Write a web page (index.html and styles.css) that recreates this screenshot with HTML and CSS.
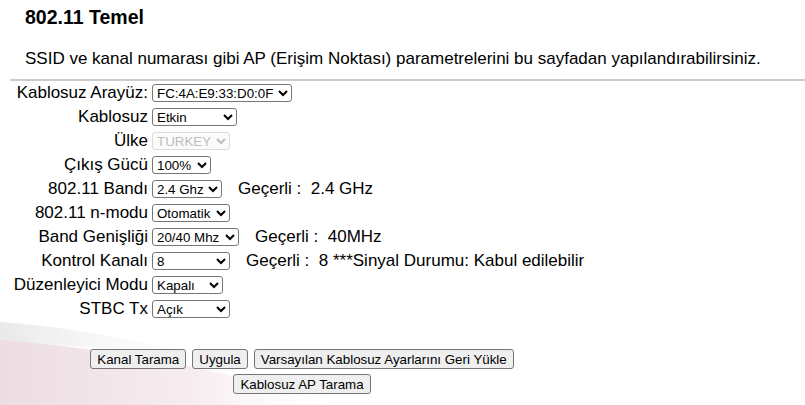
FILE: index.html
```html
<!DOCTYPE html>
<html lang="tr">
<head>
<meta charset="utf-8">
<title>802.11 Temel</title>
<link rel="stylesheet" href="styles.css">
</head>
<body>
<div class="page">
  <h1 class="title">802.11 Temel</h1>
  <p class="desc">SSID ve kanal numarası gibi AP (Erişim Noktası) parametrelerini bu sayfadan yapılandırabilirsiniz.</p>
  <hr class="sep">
  <div class="form">
    <div class="lbl">Kablosuz Arayüz:</div>
    <div class="ctl"><select class="sel w-if"><option>FC:4A:E9:33:D0:0F</option></select></div>

    <div class="lbl">Kablosuz</div>
    <div class="ctl"><select class="sel w-en"><option>Etkin</option><option>Devre Dışı</option></select></div>

    <div class="lbl">Ülke</div>
    <div class="ctl"><select class="sel w-cn" disabled><option>TURKEY</option></select></div>

    <div class="lbl">Çıkış Gücü</div>
    <div class="ctl"><select class="sel w-pw"><option>100%</option><option>75%</option><option>50%</option><option>25%</option></select></div>

    <div class="lbl">802.11 Bandı</div>
    <div class="ctl"><select class="sel w-bd"><option>2.4 Ghz</option></select><span class="cur">Geçerli :&nbsp; 2.4 GHz</span></div>

    <div class="lbl">802.11 n-modu</div>
    <div class="ctl"><select class="sel w-nm"><option>Otomatik</option><option>Kapalı</option></select></div>

    <div class="lbl">Band Genişliği</div>
    <div class="ctl"><select class="sel w-bw"><option>20/40 Mhz</option><option>20 Mhz</option></select><span class="cur">Geçerli :&nbsp; 40MHz</span></div>

    <div class="lbl">Kontrol Kanalı</div>
    <div class="ctl"><select class="sel w-ch"><option>8</option><option>Otomatik</option></select><span class="cur">Geçerli :&nbsp; 8 ***Sinyal Durumu: Kabul edilebilir</span></div>

    <div class="lbl">Düzenleyici Modu</div>
    <div class="ctl"><select class="sel w-rg"><option>Kapalı</option><option>Açık</option></select></div>

    <div class="lbl">STBC Tx</div>
    <div class="ctl"><select class="sel w-st"><option>Açık</option><option>Kapalı</option></select></div>
  </div>
  <div class="actions">
    <div class="btn-row">
      <button class="btn" type="button">Kanal Tarama</button>
      <button class="btn" type="button">Uygula</button>
      <button class="btn" type="button">Varsayılan Kablosuz Ayarlarını Geri Yükle</button>
    </div>
    <div class="btn-row">
      <button class="btn" type="button">Kablosuz AP Tarama</button>
    </div>
  </div>
</div>
</body>
</html>
```

FILE: styles.css
```css
html, body {
  margin: 0;
  padding: 0;
}
body {
  width: 805px;
  height: 405px;
  overflow: hidden;
  background-color: #ffffff;
  background-image: url("data:image/svg+xml,%3Csvg xmlns='http://www.w3.org/2000/svg' width='805' height='405'%3E%3Cdefs%3E%3ClinearGradient id='p' x1='0' y1='0' x2='1' y2='0'%3E%3Cstop offset='0' stop-color='%23eddde2'/%3E%3Cstop offset='0.55' stop-color='%23f6ecef'/%3E%3Cstop offset='1' stop-color='%23ffffff' stop-opacity='0'/%3E%3C/linearGradient%3E%3ClinearGradient id='g' x1='0' y1='0' x2='1' y2='0'%3E%3Cstop offset='0' stop-color='%23e9e9e9'/%3E%3Cstop offset='1' stop-color='%23ffffff' stop-opacity='0'/%3E%3C/linearGradient%3E%3C/defs%3E%3Cpath d='M0 322 Q120 330 250 372 Q130 346 0 342 Z' fill='url(%23g)'/%3E%3Cpath d='M0 340 Q150 350 350 405 L0 405 Z' fill='url(%23p)'/%3E%3C/svg%3E");
  background-repeat: no-repeat;
  font-family: "Liberation Sans", Arial, sans-serif;
  color: #000;
}
.page {
  display: flex;
  flex-direction: column;
}
.title {
  margin: 6px 0 0 25px;
  font-size: 19.5px;
  line-height: 22px;
  font-weight: bold;
}
.desc {
  margin: 21px 0 0 25px;
  font-size: 17px;
  line-height: 20px;
}
.sep {
  margin: 10px 0 0 10px;
  height: 2px;
  border: none;
  background: #cccccc;
}
.form {
  display: grid;
  grid-template-columns: 148px auto;
  grid-auto-rows: 24px;
  column-gap: 4px;
  align-items: center;
  font-size: 17px;
}
.lbl {
  text-align: right;
  white-space: nowrap;
  line-height: 20px;
}
.ctl {
  display: flex;
  align-items: center;
  white-space: nowrap;
  line-height: 20px;
}
.sel {
  box-sizing: border-box;
  height: 18px;
  margin: 0;
  font-family: "Liberation Sans", Arial, sans-serif;
  font-size: 13.33px;
  color: #000;
  background-color: #fff;
  border: 1px solid #767676;
  border-radius: 3px;
}
.sel:disabled {
  color: #a0a0a0;
  border-color: #d0d0d0;
  background-color: #fafafa;
}
.w-if { width: 140px; }
.w-en { width: 85px; }
.w-cn { width: 78px; }
.w-pw { width: 59px; }
.w-bd { width: 70px; }
.w-nm { width: 78px; }
.w-bw { width: 87px; }
.w-ch { width: 78px; }
.w-rg { width: 71px; }
.w-st { width: 78px; }
.cur {
  margin-left: 16px;
}
.actions {
  margin-top: 28px;
  width: 604px;
  display: flex;
  flex-direction: column;
  gap: 5px;
}
.btn-row {
  display: flex;
  justify-content: center;
  gap: 6px;
}
.btn {
  box-sizing: border-box;
  height: 20px;
  margin: 0;
  padding: 0 6px;
  font-family: "Liberation Sans", Arial, sans-serif;
  font-size: 13.33px;
  color: #000;
  background-color: #efefef;
  border: 1px solid #767676;
  border-radius: 3px;
}
```
